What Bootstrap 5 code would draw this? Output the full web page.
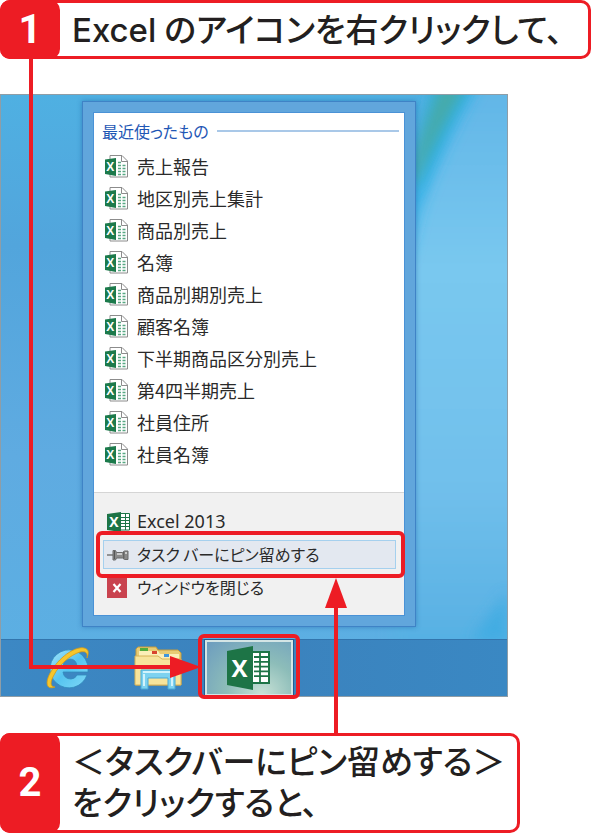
<!DOCTYPE html>
<html lang="ja">
<head>
<meta charset="utf-8">
<meta name="viewport" content="width=device-width, initial-scale=1">
<title>Excelをタスクバーにピン留めする</title>
<link href="https://cdn.jsdelivr.net/npm/bootstrap@5.3.0/dist/css/bootstrap.min.css" rel="stylesheet">
<style>
  :root { --guide-red: #ed1c24; }
  body { font-family: "Noto Sans CJK JP", sans-serif; font-feature-settings: "palt"; color: #231f20; background: #fff; }
  button { font-feature-settings: inherit; }

  /* Numbered callouts */
  .step { border: 3px solid var(--guide-red); border-radius: 10px; background: #fff; }
  .step-number { width: 60px; margin: -3px 0 -3px -3px; background: var(--guide-red); border-radius: 10px; color: #fff; font: 700 40px/1 Roboto, sans-serif; }
  .step-text { font-size: 33px; line-height: 41px; font-weight: 500; padding-left: 12px; }
  .step-one { min-height: 59px; }
  .step-two { min-height: 100px; width: 88%; padding-bottom: 4px; }
  .step-two .step-number { margin-bottom: -7px; }
  .latin { font-family: Inter, sans-serif; margin-right: 8px; }

  /* Desktop */
  .stage { padding: 35px 0 36px; }
  .desktop { width: 86%; border: 1px solid #8f9da6; background: linear-gradient(#4fb0e2 0, #52a5dc 25%, #5fabe1 60%, #5bb0e3 100%); padding-top: 6px; }
  .wallpaper { inset: 0; }
  .jump { margin: 0 18% 12px 16%; border: 1px solid #3f83c6; background: #61a6dc; padding: 10px; box-shadow: 0 0 5px rgba(20, 80, 150, .45); }
  .jump-inner { border: 1px solid #4a92d6; background: #fff; }
  .recent { padding: 2px 5px 22px 8px; }
  .recent h2 { font-size: 16px; line-height: 32px; color: #1f57b5; margin-bottom: 3px; font-weight: 400; }
  .rule { height: 2px; background: #a9c8e8; }
  .entry { height: 32px; padding-left: 3px; gap: 8px; font-size: 18px; line-height: 32px; color: #2a2a2a; text-decoration: none; white-space: nowrap; }
  .tasks { background: #f1f1f1; border-top: 1px solid #d5d5d5; padding: 12px 8px 11px 9px; }
  .task { height: 29px; margin: 2px 0; padding: 0 3px; gap: 7px; font-size: 16px; line-height: 27px; color: #2a2a2a; border: 1px solid transparent; background: transparent; white-space: nowrap; text-align: left; }
  .task-wrap { height: 33px; }
  .task.picked { border-color: #a5d0ee; background: #e3e8f0; }
  .app-name { font-family: "Noto Sans", sans-serif; font-size: 18px; }
  .outline-box { border: 4px solid var(--guide-red); border-radius: 6px; pointer-events: none; }
  .outline-task { inset: -7px -9px -7px -7px; z-index: 2; }
  .taskbar { height: 57px; background: linear-gradient(90deg, #3c88c4, #3b82bd 50%, #3a88c3); border-top: 1px solid #3275ad; padding-left: 44px; }
  .app { border: 0; background: none; padding: 0; }
  .app-ie { width: 46px; margin-right: 43px; }
  .app-files { width: 48px; margin-right: 23px; }
  .app-excel { width: 88px; border: 2px solid #d4e5e5; outline: 1px solid #265c91; background: radial-gradient(ellipse at 65% 100%, #c8e2d6 0, #8dbdb9 45%, #6c9cbf 100%); }
  .outline-app { inset: -6px -7px -3px -7px; }

  /* Connectors over the desktop */
  .link-one { left: 29px; top: -1px; bottom: 64px; width: 141px; border: solid var(--guide-red); border-width: 0 0 4px 4px; z-index: 3; }
  .link-two { left: 334px; bottom: -1px; height: 130px; width: 4px; background: var(--guide-red); z-index: 3; }
  .tip-one { left: 137px; bottom: -14px; }
  .tip-two { left: -9px; top: -26px; }
</style>
<script src="https://cdn.jsdelivr.net/npm/bootstrap@5.3.0/dist/js/bootstrap.bundle.min.js"></script>
</head>
<body>
<svg class="d-none" aria-hidden="true">
  <symbol id="sheet" viewBox="0 0 24 24">
    <path d="M5 1.500h12l5.500 5.500v16h-17.500z" fill="#fff" stroke="#8c8c8c"/>
    <path d="M16.500 1.500v6h6" fill="none" stroke="#8c8c8c"/>
    <path d="M13 8.500h3M13 11.500h3M13 14.500h3M13 17.500h3M13 20.500h3M17.500 11.500h3M17.500 14.500h3M17.500 17.500h3M17.500 20.500h3" stroke="#58a883" stroke-width="1.500"/>
    <path d="M0 5.500 11 4v18L0 20z" fill="#1c7a4b"/>
    <text x="5.300" y="17" text-anchor="middle" font-family="Liberation Sans, sans-serif" font-weight="700" font-size="12" fill="#fff">X</text>
  </symbol>
  <symbol id="excel" viewBox="0 0 44 44">
    <path d="M25 6h17v31H25z" fill="#fff" stroke="#1d7446" stroke-width="2"/>
    <path d="M33 7v29M27 11h14M27 15.800h14M27 20.600h14M27 25.400h14M27 30.200h14" stroke="#1d7446" stroke-width="1.800"/>
    <path d="M0 5 26 0v44L0 39z" fill="#1d7446"/>
    <text x="12.500" y="31" text-anchor="middle" font-family="Open Sans, sans-serif" font-weight="700" font-size="24" fill="#fff">X</text>
  </symbol>
</svg>

<main>
  <section class="step step-one d-flex">
    <div class="step-number d-flex align-items-center justify-content-center flex-shrink-0">1</div>
    <p class="step-text mb-0 align-self-center text-nowrap"><span class="latin">Excel</span>のアイコンを右クリックして、</p>
  </section>

  <section class="stage position-relative">
    <div class="desktop position-relative">
      <svg class="wallpaper position-absolute w-100 h-100" viewBox="0 0 506 600" preserveAspectRatio="none" aria-hidden="true">
        <defs>
          <filter id="soft" x="-50%" y="-50%" width="200%" height="200%"><feGaussianBlur stdDeviation="7"/></filter>
          <linearGradient id="sky" x1="0" y1="0" x2="0" y2="1">
            <stop offset="0" stop-color="#5fb4e6"/><stop offset=".3" stop-color="#79c8ef"/><stop offset=".65" stop-color="#70bfeb"/><stop offset=".85" stop-color="#5bb2e4"/><stop offset="1" stop-color="#43a9e0"/>
          </linearGradient>
        </defs>
        <path d="M455-20h80v640H390V150z" fill="url(#sky)" filter="url(#soft)"/>
        <path d="M410 100 435-20 482-20Q445 40 418 115L405 170z" fill="#2fb0e8" filter="url(#soft)"/>
        <path d="M408 75 438-10 466-10Q436 40 412 95z" fill="#46aaa8" filter="url(#soft)"/>
        <path d="M470 545 506 495V545z" fill="#38aae2" filter="url(#soft)" opacity=".7"/>
      </svg>

      <div class="jump position-relative">
        <div class="jump-inner">
          <div class="recent">
            <h2 class="d-flex align-items-center gap-2">最近使ったもの<span class="rule flex-grow-1"></span></h2>
            <ul class="list-unstyled mb-0">
              <li><a href="#" class="entry d-flex align-items-center"><svg width="24" height="24"><use href="#sheet"/></svg>売上報告</a></li>
              <li><a href="#" class="entry d-flex align-items-center"><svg width="24" height="24"><use href="#sheet"/></svg>地区別売上集計</a></li>
              <li><a href="#" class="entry d-flex align-items-center"><svg width="24" height="24"><use href="#sheet"/></svg>商品別売上</a></li>
              <li><a href="#" class="entry d-flex align-items-center"><svg width="24" height="24"><use href="#sheet"/></svg>名簿</a></li>
              <li><a href="#" class="entry d-flex align-items-center"><svg width="24" height="24"><use href="#sheet"/></svg>商品別期別売上</a></li>
              <li><a href="#" class="entry d-flex align-items-center"><svg width="24" height="24"><use href="#sheet"/></svg>顧客名簿</a></li>
              <li><a href="#" class="entry d-flex align-items-center"><svg width="24" height="24"><use href="#sheet"/></svg>下半期商品区分別売上</a></li>
              <li><a href="#" class="entry d-flex align-items-center"><svg width="24" height="24"><use href="#sheet"/></svg>第4四半期売上</a></li>
              <li><a href="#" class="entry d-flex align-items-center"><svg width="24" height="24"><use href="#sheet"/></svg>社員住所</a></li>
              <li><a href="#" class="entry d-flex align-items-center"><svg width="24" height="24"><use href="#sheet"/></svg>社員名簿</a></li>
            </ul>
          </div>
          <div class="tasks">
            <div class="task-wrap d-flex">
              <button type="button" class="task d-flex align-items-center w-100">
                <svg width="23" height="20" viewBox="0 0 23 20" aria-hidden="true">
                  <path d="M13 1.500h9.500v16.500H13z" fill="#fff" stroke="#1d7446"/>
                  <path d="M14 5.500h8M14 8.500h8M14 11.500h8M14 14.500h8M18.500 2v16" stroke="#1d7446"/>
                  <path d="M0 2 14 0v20L0 18z" fill="#1d7446"/>
                  <text x="7" y="15" text-anchor="middle" font-family="Open Sans, sans-serif" font-weight="700" font-size="14" fill="#fff">X</text>
                </svg><span class="app-name">Excel 2013</span>
              </button>
            </div>
            <div class="task-wrap d-flex position-relative">
              <button type="button" class="task picked d-flex align-items-center w-100">
                <svg width="23" height="14" viewBox="0 0 23 14" aria-hidden="true">
                  <path d="M0 7h6" stroke="#777" stroke-width="1.500"/>
                  <path d="M6 2.500h2.500l1 2h6l2-1.500h3.500v8.500h-3.500l-2-1.500h-6l-1 2H6z" fill="#8b8b8b" stroke="#6a6a6a"/>
                  <path d="M10 6h5M18 5h2" stroke="#e1e1e1" stroke-width="1.500"/><path d="M7.500 3v8M16.800 4v6.500" stroke="#555"/>
                </svg><span>タスク バーにピン留めする</span>
              </button>
              <span class="outline-box outline-task position-absolute"></span>
            </div>
            <div class="task-wrap d-flex">
              <button type="button" class="task d-flex align-items-center w-100">
                <svg width="23" height="20" viewBox="0 0 23 20" aria-hidden="true">
                  <path d="M0 0h20v20H0z" fill="#c9434f"/><path d="M6.500 6l7 8M13.500 6l-7 8" stroke="#fff" stroke-width="2.200"/>
                </svg><span>ウィンドウを閉じる</span>
              </button>
            </div>
          </div>
        </div>
      </div>

      <nav class="taskbar d-flex position-relative" aria-label="タスクバー">
        <button type="button" class="app app-ie d-flex align-items-center" aria-label="Internet Explorer">
          <svg width="46" height="48" viewBox="0 0 46 48" aria-hidden="true">
            <defs><linearGradient id="ie" x1="0" y1="0" x2="1" y2="1"><stop offset="0" stop-color="#a4e4fa"/><stop offset=".5" stop-color="#55c4f0"/><stop offset="1" stop-color="#80d8f6"/></linearGradient></defs>
            <path d="M42 31A19 19 0 1 1 43 24V28H18Q19 35 26 35Q30 35 32 31zM18 22H32Q31 15 25 15Q19 15 18 22z" fill="url(#ie)" stroke="#318abd" stroke-width=".8" fill-rule="evenodd"/>
            <path d="M10 43C0 47 0 36 7 26C16 11 32 2 39 4C44 5 44 9 42 14C43 8 40 7 35 8C25 11 14 21 9 31C5 38 5 43 10 43z" fill="#f6c62c" stroke="#d69a16" stroke-width=".8"/>
          </svg>
        </button>
        <button type="button" class="app app-files d-flex align-items-center" aria-label="エクスプローラー">
          <svg width="48" height="44" viewBox="0 0 48 44" aria-hidden="true">
            <path d="M2 3 4 1h18l2 3h20l3 3v32H2z" fill="#e8cc74" stroke="#c59b3c"/>
            <path d="M5 5h19l2 3h19v5H5z" fill="#fbefb8"/>
            <path d="M6 2h8v3H6z" fill="#52ac3c"/><path d="M18 5h5v3h-5z" fill="#d8442e"/><path d="M30 8h5v3h-5z" fill="#3e96dc"/>
            <path d="M1 10h23l4 3h19v26H1z" fill="#f7e49b" stroke="#d6b258"/>
            <path d="M7 24h34v19h-7V32H14v11H7z" fill="#7dd2f0" stroke="#4aa9d5"/>
            <path d="M9 26h30M10 28v12M38 28v12" stroke="#d1f3fc" stroke-width="2"/>
          </svg>
        </button>
        <div class="position-relative d-flex">
          <button type="button" class="app app-excel d-flex align-items-center justify-content-center" aria-label="Excel 2013">
            <svg width="44" height="44" aria-hidden="true"><use href="#excel"/></svg>
          </button>
          <span class="outline-box outline-app position-absolute"></span>
        </div>
      </nav>
    </div>

    <div class="link-one position-absolute">
      <svg class="tip-one position-absolute" width="31" height="24" viewBox="0 0 31 24" aria-hidden="true"><path d="M0 1 31 12 0 23z" fill="#ed1c24"/></svg>
    </div>
    <div class="link-two position-absolute">
      <svg class="tip-two position-absolute" width="22" height="30" viewBox="0 0 22 30" aria-hidden="true"><path d="M11 0 22 30H0z" fill="#ed1c24"/></svg>
    </div>
  </section>

  <section class="step step-two d-flex">
    <div class="step-number d-flex align-items-center justify-content-center flex-shrink-0">2</div>
    <p class="step-text mb-0 align-self-center text-nowrap">＜タスクバーにピン留めする＞<br>をクリックすると、</p>
  </section>
</main>
</body>
</html>
